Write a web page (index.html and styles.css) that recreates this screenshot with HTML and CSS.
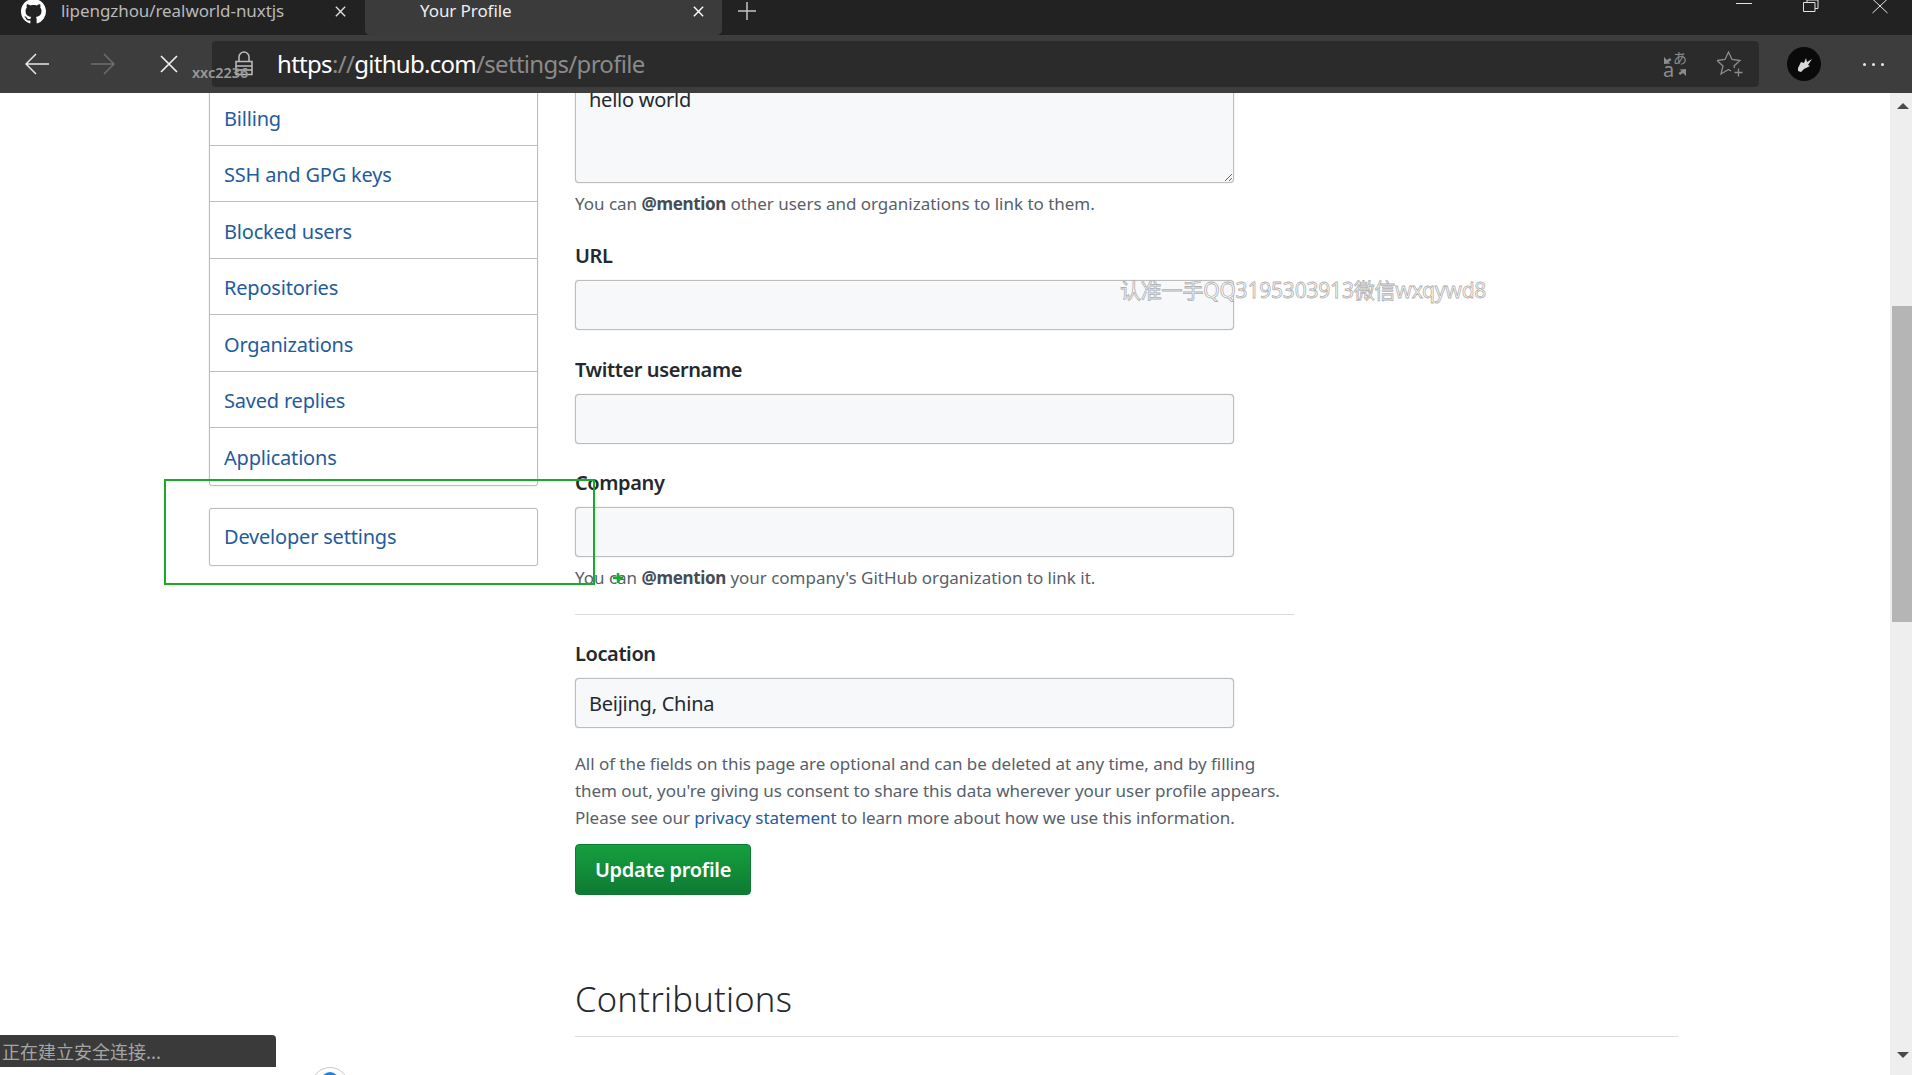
FILE: index.html
```html
<!DOCTYPE html>
<html lang="en">

<head>
    <meta charset="UTF-8">
    <meta name="viewport" content="width=device-width, initial-scale=1.0">
    <title>Your Profile</title>
    <link rel="stylesheet" href="styles.css">
</head>

<body>
    <div class="tabstrip">
        <div class="tab">
            <svg class="tab-logo" viewBox="0 0 16 16" fill="#fff"><path d="M8 0C3.58 0 0 3.58 0 8c0 3.54 2.29 6.53 5.47 7.59.4.07.55-.17.55-.38 0-.19-.01-.82-.01-1.49-2.01.37-2.53-.49-2.69-.94-.09-.23-.48-.94-.82-1.13-.28-.15-.68-.52-.01-.53.63-.01 1.08.58 1.23.82.72 1.21 1.87.87 2.33.66.07-.52.28-.87.51-1.07-1.78-.2-3.64-.89-3.64-3.95 0-.87.31-1.59.82-2.15-.08-.2-.36-1.02.08-2.12 0 0 .67-.21 2.2.82.64-.18 1.32-.27 2-.27s1.36.09 2 .27c1.53-1.04 2.2-.82 2.2-.82.44 1.1.16 1.92.08 2.12.51.56.82 1.27.82 2.15 0 3.07-1.87 3.75-3.65 3.95.29.25.54.73.54 1.48 0 1.07-.01 1.93-.01 2.2 0 .21.15.46.55.38A8.01 8.01 0 0 0 16 8c0-4.42-3.58-8-8-8z"/></svg>
            <span class="tab-title">lipengzhou/realworld-nuxtjs</span>
            <svg class="tab-close" viewBox="0 0 14 14"><path d="M2 2l10 10M12 2L2 12"/></svg>
        </div>
        <div class="tab tab-active">
            <span class="tab-title">Your Profile</span>
            <svg class="tab-close" viewBox="0 0 14 14"><path d="M2 2l10 10M12 2L2 12"/></svg>
        </div>
        <svg class="tab-new" viewBox="0 0 20 20"><path d="M10 1v18M1 10h18"/></svg>
        <div class="window-btns">
            <svg viewBox="0 0 16 14"><path d="M0 3.5h16"/></svg>
            <svg viewBox="0 0 16 14"><path d="M.5 2.5h11.5v9H.5zM4 2.5V0h11v8.500h-3"/></svg>
            <svg viewBox="0 0 16 14"><path d="M.5-1l15 14M15.500-1L.5 13"/></svg>
        </div>
    </div>

    <div class="toolbar">
        <svg class="nav-icon" viewBox="0 0 24 24"><path d="M24 12H1M11 2L1 12l10 10"/></svg>
        <svg class="nav-icon nav-off" viewBox="0 0 24 24"><path d="M0 12h23M13 2l10 10-10 10"/></svg>
        <svg class="nav-stop" viewBox="0 0 18 18"><path d="M1 1l16 16M17 1L1 17"/></svg>
        <div class="address">
            <svg class="lock" viewBox="0 0 20 26"><path d="M2 11.500h16v13H2zM5 11.500V7a5 5 0 0 1 10 0v4.500M2 16h16M2 20h16"/></svg>
            <span class="url"><b>https</b><i>://</i><b>github.com</b><i>/settings/profile</i></span>
            <div class="address-icons">
                <div class="translate">
                    <span class="tr-a">a</span>
                    <span class="tr-jp">あ</span>
                    <svg viewBox="0 0 24 26" fill="#8c8c8c"><path d="M1 6v7l6.500-.5-2-1.500 3-2-1.500-2-3 2zM23 25v-7l-6.500.5 2 1.500-3 2 1.500 2 3-2z"/></svg>
                </div>
                <svg class="star" viewBox="0 0 26 26"><path d="M17.500 17L17 15l6-5.500-8-1L11.500 1 8 8.500l-8 1L6 15 4 23l7.500-4.500L14 20M21.500 17.500v8M17.500 21.500h8"/></svg>
            </div>
        </div>
        <svg class="avatar" viewBox="0 0 34 34"><circle cx="17" cy="17" r="17" fill="#0a0a0a"/><path d="M11 21l3-6 3 1 2-5 1 4 5-3-4 6 2 1-6 3-3 3-3-1z" fill="#d8d8d8"/></svg>
        <div class="more"><span></span><span></span><span></span></div>
    </div>

    <div class="viewport">
        <div class="page">
            <div class="side">
                <ul class="side-menu side-main">
                    <li><a href="#">Billing</a></li>
                    <li><a href="#">SSH and GPG keys</a></li>
                    <li><a href="#">Blocked users</a></li>
                    <li><a href="#">Repositories</a></li>
                    <li><a href="#">Organizations</a></li>
                    <li><a href="#">Saved replies</a></li>
                    <li><a href="#">Applications</a></li>
                </ul>
                <ul class="side-menu side-dev">
                    <li><a href="#">Developer settings</a></li>
                </ul>
            </div>

            <div class="content">
                <form class="profile-form">
                    <textarea class="bio">hello world</textarea>
                    <p class="note">You can <strong>@mention</strong> other users and organizations to link to them.</p>

                    <div class="field field-first">
                        <label for="url">URL</label>
                        <input type="text" id="url">
                    </div>
                    <div class="field">
                        <label for="twitter">Twitter username</label>
                        <input type="text" id="twitter">
                    </div>
                    <div class="field">
                        <label for="company">Company</label>
                        <input type="text" id="company">
                    </div>
                    <p class="note note-company">You can <strong>@mention</strong> your company's GitHub organization to link it.</p>

                    <hr class="form-rule">

                    <div class="field field-location">
                        <label for="location">Location</label>
                        <input type="text" id="location" value="Beijing, China">
                    </div>

                    <p class="consent">All of the fields on this page are optional and can be deleted at any time, and by filling<br>them out, you're giving us consent to share this data wherever your user profile appears.<br>Please see our <a href="#">privacy statement</a> to learn more about how we use this information.</p>

                    <button type="button" class="btn-update">Update profile</button>
                </form>

                <h2 class="subhead">Contributions</h2>
            </div>
        </div>

        <div class="scrollbar">
            <span class="arrow-up"></span>
            <div class="thumb"></div>
            <span class="arrow-down"></span>
        </div>
    </div>

    <!-- cosas que van encima de la pagina -->
    <div class="mark-user">xxc2236</div>
    <div class="mark-qq">认准一手QQ3195303913微信wxqywd8</div>
    <div class="select-box"></div>
    <svg class="select-plus" viewBox="0 0 12 12"><path d="M6 1v10M1 6h10"/></svg>
    <div class="status">正在建立安全连接...</div>
    <div class="bottom-avatar"><span></span></div>
</body>

</html>
```

FILE: styles.css
```css
* {
    box-sizing: border-box;
}

html, body {
    margin: 0;
    height: 1075px;
    overflow: hidden;
}

body {
    position: relative;
    font-family: "Noto Sans", Arial, sans-serif;
    font-size: 17px;
    color: #24292e;
    background-color: #fff;
}

/* barra de pestañas */
.tabstrip {
    display: flex;
    height: 35px;
    background-color: #222;
}

.tab {
    position: relative;
    display: flex;
    width: 365px;
    height: 35px;
    padding-left: 61px;
    color: #b9b9b9;
    line-height: 22px;
}

.tab-logo {
    position: absolute;
    left: 21px;
    top: -1px;
    width: 25px;
    height: 25px;
}

.tab-title {
    font-size: 17px;
    letter-spacing: -0.08px;
}

.tab-close {
    position: absolute;
    left: 334px;
    top: 5px;
    width: 13px;
    height: 13px;
    fill: none;
    stroke: #ddd;
    stroke-width: 1.500;
}

.tab-active {
    width: 357px;
    padding-left: 55px;
    background-color: #3b3b3b;
    border-radius: 0 0 5px 5px;
    color: #eee;
}

.tab-active .tab-close {
    left: 327px;
    stroke: #fff;
}

.tab-new {
    width: 20px;
    height: 20px;
    margin: 1px 0 0 15px;
    fill: none;
    stroke: #c4c4c4;
    stroke-width: 1.500;
}

.window-btns {
    display: flex;
    gap: 53px;
    margin-left: auto;
    padding-right: 24px;
}

.window-btns svg {
    width: 16px;
    height: 14px;
    fill: none;
    stroke: #e4e4e4;
    stroke-width: 1;
    overflow: hidden;
}

.window-btns svg:first-child {
    margin-right: -2px;
}

/* barra de direcciones */
.toolbar {
    display: flex;
    align-items: center;
    height: 58px;
    padding-left: 25px;
    background-color: #3d3d3d;
}

.nav-icon {
    width: 24px;
    height: 24px;
    margin-right: 42px;
    fill: none;
    stroke: #e8e8e8;
    stroke-width: 1.500;
}

.nav-off {
    stroke: #6e6e6e;
    margin-right: 45px;
}

.nav-stop {
    width: 18px;
    height: 18px;
    margin-right: 34px;
    fill: none;
    stroke: #f0f0f0;
    stroke-width: 1.700;
}

.address {
    display: flex;
    align-items: center;
    width: 1547px;
    height: 46px;
    padding-left: 22px;
    background-color: #2b2b2b;
    border-radius: 4px;
}

.lock {
    width: 20px;
    height: 26px;
    margin: 0 23px 2px 0;
    fill: none;
    stroke: #bdbdbd;
    stroke-width: 1.500;
}

.url {
    font-size: 24px;
    letter-spacing: -0.7px;
    line-height: 32px;
}

.url b {
    font-weight: 400;
    color: #fff;
}

.url i {
    font-style: normal;
    color: #8a8a8a;
}

.address-icons {
    display: flex;
    align-items: center;
    gap: 30px;
    margin-left: auto;
    padding-right: 16px;
}

.translate {
    position: relative;
    width: 24px;
    height: 26px;
}

.translate svg {
    display: block;
    width: 24px;
    height: 26px;
}

.tr-a, .tr-jp {
    position: absolute;
    color: #8c8c8c;
    line-height: 14px;
}

.tr-a {
    left: 0;
    bottom: 0;
    font-size: 20px;
}

.tr-jp {
    right: 0;
    top: -1px;
    font-family: "Noto Sans CJK JP", sans-serif;
    font-size: 14px;
}

.star {
    width: 26px;
    height: 26px;
    fill: none;
    stroke: #8c8c8c;
    stroke-width: 1.300;
}

.avatar {
    width: 34px;
    height: 34px;
    margin-left: 28px;
}

.more {
    display: flex;
    gap: 6px;
    margin-left: 42px;
}

.more span {
    width: 3px;
    height: 3px;
    background-color: #e8e8e8;
    border-radius: 50%;
}

/* pagina */
.viewport {
    display: flex;
    height: 982px;
    overflow: hidden;
}

.page {
    flex: 1;
    display: flex;
    padding-left: 209px;
}

.side {
    width: 329px;
    margin-top: -5px;
}

.side-menu {
    margin: 0;
    padding: 0;
    list-style: none;
    border: 1px solid #bdbdbd;
    border-radius: 3px;
    box-shadow: 0 0 1px #aaa;
}

.side-menu li {
    display: flex;
    align-items: center;
    height: 56.500px;
    padding: 3px 0 0 14px;
    border-bottom: 1px solid #bdbdbd;
}

.side-menu li:last-child {
    border-bottom: none;
}

.side-menu a {
    color: #245b9b;
    text-decoration: none;
    font-size: 20px;
    letter-spacing: -0.2px;
}

.side-dev {
    margin-top: 22px;
}

.side-dev li {
    padding-top: 0;
}

.content {
    width: 1103px;
    margin-left: 37px;
}

.profile-form {
    width: 719px;
}

.bio, .field input {
    display: block;
    width: 659px;
    background-color: #f6f8fa;
    border: 1px solid #bdbdbd;
    border-radius: 4px;
    box-shadow: 0 0 1px #aaa;
    color: #24292e;
    font-family: "Noto Sans", Arial, sans-serif;
    font-size: 20px;
    letter-spacing: -0.25px;
}

.bio {
    height: 123px;
    margin-top: -33px;
    padding: 25px 13px 0;
    line-height: 28px;
}

.note {
    margin: 9px 0 0;
    color: #586069;
    line-height: 24px;
    letter-spacing: -0.02px;
}

.note strong {
    color: #444d56;
    letter-spacing: -0.33px;
}

.field {
    margin-top: 27.500px;
}

.field-first {
    margin-top: 28px;
}

.field label {
    display: block;
    margin-bottom: 12px;
    font-size: 20px;
    font-weight: 600;
    line-height: 24px;
    letter-spacing: -0.4px;
}

.field input {
    height: 50px;
    padding: 0 13px;
}

.form-rule {
    height: 1px;
    margin: 24px 0 0;
    background-color: #ddd;
    border: none;
}

.field-location {
    margin-top: 27px;
}

.consent {
    margin: 22px 0 0;
    width: 719px;
    color: #586069;
    line-height: 27px;
    letter-spacing: -0.04px;
    white-space: nowrap;
}

.consent a {
    color: #245b9b;
    text-decoration: none;
}

.btn-update {
    display: block;
    width: 176px;
    height: 51px;
    margin-top: 13px;
    padding: 0;
    color: #fff;
    font-family: "Noto Sans", Arial, sans-serif;
    font-size: 20px;
    font-weight: 600;
    letter-spacing: -0.3px;
    background-image: linear-gradient(#16a03e, #0e7a33);
    border: 1px solid #0f7a34;
    border-radius: 4px;
    cursor: pointer;
}

.subhead {
    height: 79px;
    margin: 63px 0 0;
    padding-top: 17px;
    font-size: 34.500px;
    font-weight: 300;
    line-height: 48px;
    color: #24292e;
    border-bottom: 1px solid #ddd;
    letter-spacing: 0.25px;
}

.scrollbar {
    position: relative;
    width: 22px;
    background-color: #eee;
}

.thumb {
    position: absolute;
    left: 2px;
    right: 0;
    top: 213px;
    height: 316px;
    background-color: #b5b5b5;
}

.arrow-up, .arrow-down {
    position: absolute;
    left: 7px;
    width: 0;
    height: 0;
    border-left: 6px solid transparent;
    border-right: 6px solid transparent;
}

.arrow-up {
    top: 10px;
    border-bottom: 6px solid #4a4a4a;
}

.arrow-down {
    bottom: 17px;
    border-top: 6px solid #4a4a4a;
}

/* encima de la pagina */
.mark-user {
    position: absolute;
    left: 192px;
    top: 62px;
    color: #9a9a9a;
    font-size: 14.500px;
    font-weight: 600;
    line-height: 20px;
}

.mark-qq {
    position: absolute;
    left: 1120px;
    top: 276px;
    color: #fff;
    font-family: "Noto Sans", "Noto Sans CJK SC", sans-serif;
    font-size: 21px;
    line-height: 28px;
    letter-spacing: -0.2px;
    white-space: nowrap;
    -webkit-text-stroke: 0.8px #b0b0b0;
}

.select-box {
    position: absolute;
    left: 164px;
    top: 479px;
    width: 431px;
    height: 106px;
    border: 2px solid #17ab26;
}

.select-plus {
    position: absolute;
    left: 612px;
    top: 572px;
    width: 12px;
    height: 12px;
    fill: none;
    stroke: #17ab26;
    stroke-width: 2.500;
}

.status {
    position: absolute;
    left: 0;
    top: 1035px;
    width: 276px;
    height: 32px;
    padding-left: 2px;
    background-color: #3a3a3a;
    border-radius: 0 4px 0 0;
    color: #a5a5a5;
    font-family: "Noto Sans CJK SC", sans-serif;
    font-size: 18px;
    line-height: 32px;
}

.bottom-avatar {
    position: absolute;
    left: 311px;
    top: 1067px;
    width: 38px;
    height: 38px;
    background-color: #fff;
    border: 1px solid #c8c8c8;
    border-radius: 50%;
}

.bottom-avatar span {
    display: block;
    width: 18px;
    height: 18px;
    margin: 4px auto 0;
    background-color: #1a86e0;
    border-radius: 50%;
}
```
